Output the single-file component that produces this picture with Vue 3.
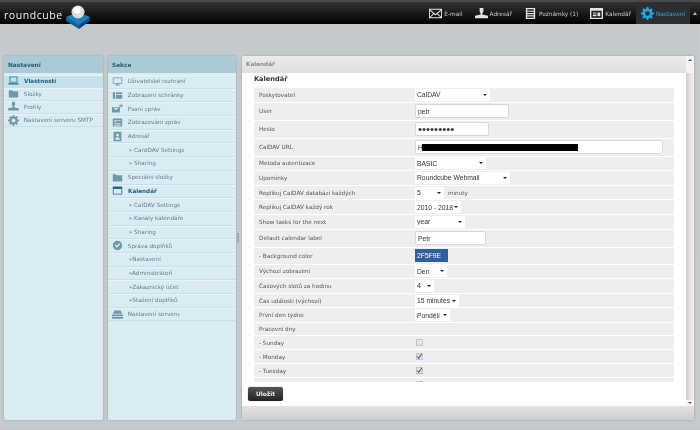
<template>
  <div class="page">
    <header class="topbar">
      <div class="logo">
        <span class="logo__text">roundcube</span>
        <svg class="logo__cube" viewBox="0 0 26 26">
          <path d="M1 13 13 8l12 5-11 10z" fill="#1d7fc0" />
          <path d="M1 13v4l13 8v-4z" fill="#125f99" />
          <path d="M25 13v4L14 25v-4z" fill="#0c4a7c" />
          <circle cx="13" cy="8" r="6.5" fill="#dcdcdc" />
          <circle cx="12" cy="6" r="3.5" fill="#fff" />
        </svg>
      </div>
      <nav class="topnav">
        <a v-for="item in topnav" :key="item.label" :class="['topnav__item', { active: item.active }]">
          <svg class="topnav__icon" :viewBox="item.icon === 'gear' ? '0 0 14 14' : '0 -1 14 14'"><path :d="icons[item.icon]" fill-rule="evenodd" /></svg>
          {{ item.label }}
        </a>
        <span class="topnav__more"></span>
      </nav>
    </header>

    <main class="columns">
      <section class="panel">
        <h2 class="panel__title">Nastavení</h2>
        <ul class="list list--short">
          <li v-for="item in settings" :key="item.label" :class="{ active: item.active }">
            <svg class="list__icon" :viewBox="item.icon === 'gear' ? '0 0 14 14' : '0 -1 14 14'"><path :d="icons[item.icon]" fill-rule="evenodd" /></svg>
            {{ item.label }}
          </li>
        </ul>
      </section>

      <section class="panel">
        <h2 class="panel__title">Sekce</h2>
        <ul class="list">
          <li v-for="(item, index) in sections" :key="index" :class="{ current: item.current, sub: item.sub }">
            <svg v-if="item.icon" class="list__icon" viewBox="0 -1 14 14"><path :d="icons[item.icon]" fill-rule="evenodd" /></svg>
            {{ item.label }}
          </li>
        </ul>
      </section>

      <div class="splitter"></div>

      <section class="content">
        <div class="content__title">Kalendář</div>
        <div class="content__main">
          <div class="content__body">
            <h3 class="content__heading">Kalendář</h3>
            <div class="form">
              <div v-for="row in rows" :key="row.label" :class="['row', 'row--' + row.type]">
                <label class="row__label">{{ row.label }}</label>
                <div class="row__value">
                  <span v-if="row.type === 'select'" class="select" :style="{ width: row.width + 'px' }">
                    <select><option>{{ row.value }}</option></select>
                  </span>
                  <span v-if="row.unit" class="row__unit">{{ row.unit }}</span>
                  <input v-if="row.type === 'input'" class="input" :type="row.password ? 'password' : 'text'" :value="row.value" :style="{ width: row.width + 'px' }" />
                  <i v-if="row.redacted" class="redacted"></i>
                  <span v-if="row.type === 'color'" class="swatch">{{ row.value }}</span>
                  <span v-if="row.type === 'check'" class="check">
                    <svg v-if="row.value" viewBox="0 0 8 8"><path d="M1.5 4 3.2 6.2 6.5 1" /></svg>
                  </span>
                </div>
              </div>
            </div>
          </div>
          <div class="actions">
            <button class="save">Uložit</button>
          </div>
          <div class="scrollbar">
            <span class="scrollbar__btn scrollbar__btn--up"></span>
            <span class="scrollbar__thumb"></span>
            <span class="scrollbar__btn scrollbar__btn--down"></span>
          </div>
        </div>
        <div class="content__footer"></div>
      </section>
    </main>
  </div>
</template>

<script setup>
const icons = {
  mail: 'M0 1h14v10H0zM1.5 2 7 6.5 12.5 2zM1 3v6.5L4.5 6zM13 3 9.5 6 13 9.500zM5.300 6.800 1.800 10h10.400L8.700 6.800 7 8z',
  person: 'M5 0h4v4L8 5.500V7l6 1.500V11H0V8.500L6 7V5.500L5 4z',
  notes: 'M2 0h10v12H2zM3.500 1.500v1.500h7V1.500zM3.500 4.200v1.300h7V4.200zM3.500 6.700v1.300h7V6.700zM3.500 9.200v1.300h7V9.200z',
  calendar: 'M0 0h14v12H0zM1.500 3v7.500h11V3zM3 5h4v1H3zM8 5h3v4H8zM3 7h4v2H3z',
  gear: 'M6 0H8L8.300 1.900 9.600 2.400 11.100 1.300 12.700 2.900 11.600 4.400 12.100 5.700 14 6V8L12.100 8.300 11.600 9.600 12.700 11.100 11.100 12.700 9.600 11.600 8.300 12.100 8 14H6L5.700 12.100 4.400 11.600 2.900 12.700 1.300 11.100 2.400 9.600 1.900 8.300 0 8V6L1.900 5.700 2.400 4.400 1.300 2.900 2.900 1.300 4.400 2.400 5.700 1.900ZM7 4.500a2.500 2.500 0 1 0 0 5 2.500 2.500 0 0 0 0-5Z',
  laptop: 'M2 1h10v7.500H2zM3 2v5.500h8V2zM0 9.500h14l-1 1.500H1z',
  folder: 'M1 2h4l1 1h7v8H1z',
  monitor: 'M1 1h12v8H8v1h2v1H4v-1h2V9H1zM2 2v6h10V2z',
  inbox: 'M1 2h3v8H1zM5 2h8v2H5zM5 5h8v5H5z',
  compose: 'M0 4h10v7H0zM1.500 5 5 7.800 8.500 5zM11 0h1v2h2v1h-2v2h-1V3H9V2h2z',
  view: 'M1 1h12v10H1zM3 3v2h3V3zM7 3v1h4V3zM3 7v1h8V7zM3 9v1h8V9z',
  book: 'M2 0h10v12H2zM7 2.500a1.800 1.800 0 1 0 0 3.600 1.800 1.800 0 0 0 0-3.600zM4 10c0-4 6-4 6 0z',
  box: 'M1 1h12v10H1zM2 4v6h10V4z',
  badge: 'M7 0a6 6 0 1 0 0 12A6 6 0 0 0 7 0zM3.500 6l1.200-1.200 1.600 1.600 3.200-3.200 1.200 1.200-4.400 4.400z',
  server: 'M3 1h8l2 4H1zM0 6h14v2H0zM0 9h14v2.500H0z',
}

const topnav = [
  { label: 'E-mail', icon: 'mail' },
  { label: 'Adresář', icon: 'person' },
  { label: 'Poznámky (1)', icon: 'notes' },
  { label: 'Kalendář', icon: 'calendar' },
  { label: 'Nastavení', icon: 'gear', active: true },
]

const settings = [
  { label: 'Vlastnosti', icon: 'laptop', active: true },
  { label: 'Složky', icon: 'folder' },
  { label: 'Profily', icon: 'person' },
  { label: 'Nastavení serveru SMTP', icon: 'gear' },
]

const sections = [
  { label: 'Uživatelské rozhraní', icon: 'monitor' },
  { label: 'Zobrazení schránky', icon: 'inbox' },
  { label: 'Psaní zpráv', icon: 'compose' },
  { label: 'Zobrazování zpráv', icon: 'view' },
  { label: 'Adresář', icon: 'book' },
  { label: '» CardDAV Settings', sub: true },
  { label: '» Sharing', sub: true },
  { label: 'Speciální složky', icon: 'folder' },
  { label: 'Kalendář', icon: 'box', current: true },
  { label: '» CalDAV Settings', sub: true },
  { label: '» Kanály kalendáře', sub: true },
  { label: '» Sharing', sub: true },
  { label: 'Správa doplňků', icon: 'badge' },
  { label: '»Nastavení', sub: true },
  { label: '»Administrátoři', sub: true },
  { label: '»Zákaznický účet', sub: true },
  { label: '»Stažení doplňků', sub: true },
  { label: 'Nastavení serveru', icon: 'server' },
]

const rows = [
  { label: 'Poskytovatel', type: 'select', value: 'CalDAV', width: 75 },
  { label: 'User', type: 'input', value: 'petr', width: 94 },
  { label: 'Heslo', type: 'input', value: 'secret123', width: 74, password: true },
  { label: 'CalDAV URL', type: 'input', value: 'H', width: 248, redacted: true },
  { label: 'Metoda autentizace', type: 'select', value: 'BASIC', width: 71 },
  { label: 'Upomínky', type: 'select', value: 'Roundcube Webmail', width: 95 },
  { label: 'Replikuj CalDAV databázi každých', type: 'select', value: '5', width: 29, unit: 'minuty' },
  { label: 'Replikuj CalDAV každý rok', type: 'select', value: '2010 - 2018', width: 46 },
  { label: 'Show tasks for the next', type: 'select', value: 'year', width: 50 },
  { label: 'Default calendar label', type: 'input', value: 'Petr', width: 71 },
  { label: '- Background color', type: 'color', value: '2F5F9E' },
  { label: 'Výchozí zobrazení', type: 'select', value: 'Den', width: 32 },
  { label: 'Časových slotů za hodinu', type: 'select', value: '4', width: 19 },
  { label: 'Čas události (výchozí)', type: 'select', value: '15 minutes', width: 44 },
  { label: 'První den týdne', type: 'select', value: 'Pondělí', width: 35 },
  { label: 'Pracovní dny', type: 'plain' },
  { label: '- Sunday', type: 'check', value: false },
  { label: '- Monday', type: 'check', value: true },
  { label: '- Tuesday', type: 'check', value: true },
  { label: '- Wednesday', type: 'check', value: true },
]
</script>

<style>
html,
body {
  margin: 0;
  background: #c4cacd;
}
</style>

<style scoped>
.page {
  position: relative;
  width: 700px;
  height: 430px;
  overflow: hidden;
  background:
    repeating-linear-gradient(90deg, rgba(255, 255, 255, 0.05) 0 1px, transparent 1px 3px),
    repeating-linear-gradient(0deg, rgba(0, 0, 0, 0.025) 0 1px, transparent 1px 2px),
    #c5cbce;
  font-family: "DejaVu Sans", sans-serif;
  font-size: 5.7px;
  filter: blur(0.3px);
}

.topbar {
  display: flex;
  justify-content: space-between;
  height: 24px;
  box-sizing: border-box;
  border-top: 2px solid #4a4a4a;
  background: linear-gradient(#333, #000);
}

.logo {
  position: relative;
  padding-left: 4px;
}

.logo__text {
  color: #f2f2f2;
  font-family: "Open Sans", sans-serif;
  font-size: 10.5px;
  line-height: 27px;
  letter-spacing: 0.55px;
}

.logo__cube {
  position: absolute;
  left: 65px;
  top: 2px;
  width: 26px;
  height: 26px;
}

.topnav {
  display: flex;
  align-items: stretch;
  padding-right: 3px;
  font-size: 5.8px;
}

.topnav__item {
  display: flex;
  align-items: center;
  gap: 2px;
  padding: 1px 6px 0;
  color: #c8c8c8;
  white-space: nowrap;
}

.topnav__item.active {
  background: #2b2f31;
  color: #38a3d6;
  margin-left: -1px;
  padding: 1px 5px 0;
}

.topnav__icon {
  width: 13px;
  height: 13px;
  fill: #e2e2e2;
}

.topnav__item.active .topnav__icon {
  fill: #2aa0dc;
}

.topnav__more {
  width: 0;
  height: 0;
  margin: 10px 0 0 3px;
  border: 2px solid transparent;
  border-top: 0;
  border-bottom: 3px solid #bbb;
}

.columns {
  display: flex;
  align-items: stretch;
  height: 364px;
  margin: 32px 6px 0 4px;
}

.panel {
  box-sizing: border-box;
  width: 99px;
  margin-right: 5px;
  border-radius: 2px;
  background: #daecf3;
  box-shadow: 0 0 2px #8f9a9f;
  overflow: hidden;
}

.panel + .panel {
  width: 128px;
  margin-right: 0;
}

.panel__title {
  margin: 0;
  height: 17px;
  background: #abcad5;
  color: #1c5a78;
  font-size: 5.8px;
  font-weight: bold;
  line-height: 18px;
  padding-left: 4px;
}

.list {
  margin: 2px 0 0;
  padding: 0;
  list-style: none;
}

.list--short {
  margin-top: 1.500px;
}

.list li {
  display: flex;
  align-items: center;
  gap: 3px;
  box-sizing: border-box;
  height: 13.7px;
  padding-left: 4px;
  border-bottom: 1px solid #c8dfe8;
  box-shadow: inset 0 1px 0 #e8f4f8;
  color: #5f7f8e;
  white-space: pre;
}

.list--short li {
  height: 13.200px;
}

.list li.active {
  background: #c3e2ee;
  color: #1c5a78;
  font-weight: bold;
}

.list li.current {
  color: #1c5a78;
  font-weight: bold;
}

.list li.sub {
  padding-left: 19px;
}

.list__icon {
  flex: none;
  width: 11px;
  height: 11px;
  fill: #6f98a9;
}

.active .list__icon,
.current .list__icon {
  fill: #1e6a8c;
}

.splitter {
  flex: none;
  width: 2px;
  height: 10px;
  margin: 177px 3px 0 1px;
  background: #a3acb0;
}

.content {
  flex: 1;
  display: flex;
  flex-direction: column;
  min-width: 0;
  border-radius: 2px;
  background: #fff;
  box-shadow: 0 0 2px #8f9a9f;
  overflow: hidden;
}

.content__title {
  height: 17px;
  padding-left: 4px;
  background: linear-gradient(#ececec, #dfdfdf);
  color: #8b8b8b;
  font-size: 5.7px;
  font-weight: bold;
  line-height: 17px;
  margin-right: 7px;
}

.content__main {
  position: relative;
  flex: 1;
  min-height: 0;
  display: flex;
  flex-direction: column;
}

.content__body {
  height: 309px;
  margin-right: 20px;
  padding: 0 0 0 12px;
  overflow: hidden;
}

.content__heading {
  margin: 0;
  height: 15px;
  color: #333;
  font-size: 6.6px;
  font-weight: bold;
  line-height: 12px;
}

.row {
  display: flex;
  align-items: center;
  box-sizing: border-box;
  margin-bottom: 1px;
  background: #eee;
  color: #555;
}

.row--select {
  height: 13.600px;
}

.row--input {
  height: 17px;
}

.row--color {
  height: 16px;
}

.row--plain {
  height: 12.500px;
}

.row--check {
  height: 13px;
}

.row__label {
  flex: none;
  width: 156px;
  padding-left: 5px;
}

.row__value {
  position: relative;
  display: flex;
  align-items: center;
  gap: 4px;
}

.select {
  position: relative;
  display: inline-block;
  height: 12px;
  background: #fff;
}

.select select {
  display: block;
  width: 100%;
  height: 12px;
  border: 0;
  padding: 0 0 0 2px;
  background: transparent;
  color: #333;
  font: 6.750px "Liberation Sans", sans-serif;
  appearance: none;
}

.select::after {
  content: "";
  position: absolute;
  right: 3px;
  top: 5px;
  border: 2px solid transparent;
  border-bottom: 0;
  border-top: 2px solid #222;
}

.input {
  box-sizing: border-box;
  height: 14px;
  padding: 0 2px;
  border: 1px solid #d8d8d8;
  border-radius: 2px;
  background: #fff;
  color: #333;
  font: 6.750px "Liberation Sans", sans-serif;
  outline: 0;
}

.input[type="password"] {
  font-size: 11.500px;
}

.redacted {
  position: absolute;
  left: 7px;
  top: 4px;
  width: 156px;
  height: 7px;
  background: #000;
}

.swatch {
  box-sizing: border-box;
  width: 33px;
  height: 13px;
  padding-left: 2px;
  background: #2f5f9e;
  color: #fff;
  font: 6.750px/13px "Liberation Sans", sans-serif;
}

.check {
  display: block;
  box-sizing: border-box;
  width: 7px;
  height: 7px;
  margin-left: 1px;
  border: 1px solid #c4c4c4;
  background: #e4e4e4;
}

.check svg {
  display: block;
  width: 7px;
  height: 7px;
  margin: -1px;
  fill: none;
  stroke: #3d5fa8;
  stroke-width: 1.200;
}

.actions {
  padding: 5px 0 0 6px;
}

.save {
  display: block;
  width: 35px;
  height: 14px;
  padding: 0;
  border: 0;
  border-radius: 2px;
  background: linear-gradient(#555, #222);
  box-shadow: 0 0 1px #777;
  color: #eee;
  font: bold 5.900px "DejaVu Sans", sans-serif;
}

.scrollbar {
  position: absolute;
  top: -17px;
  right: 0;
  bottom: 0;
  display: flex;
  flex-direction: column;
  width: 8px;
  background: #eee;
}

.scrollbar__btn {
  position: relative;
  flex: none;
  height: 6px;
  background: #f4f4f4;
}

.scrollbar__btn--up {
  height: 17px;
}

.scrollbar__btn::after {
  content: "";
  position: absolute;
  left: 2px;
  top: 3px;
  border: 2px solid transparent;
  border-top: 0;
  border-bottom: 2px solid #555;
}

.scrollbar__btn--down::after {
  top: 2px;
  border-top: 2px solid #555;
  border-bottom: 0;
}

.scrollbar__thumb {
  flex: 1;
  background: linear-gradient(90deg, #d0d0d0, #e6e6e6 60%, #f2f2f2);
}

.content__footer {
  flex: none;
  height: 14px;
  background: linear-gradient(#e2e2e2, #cdcdcd);
}
</style>
